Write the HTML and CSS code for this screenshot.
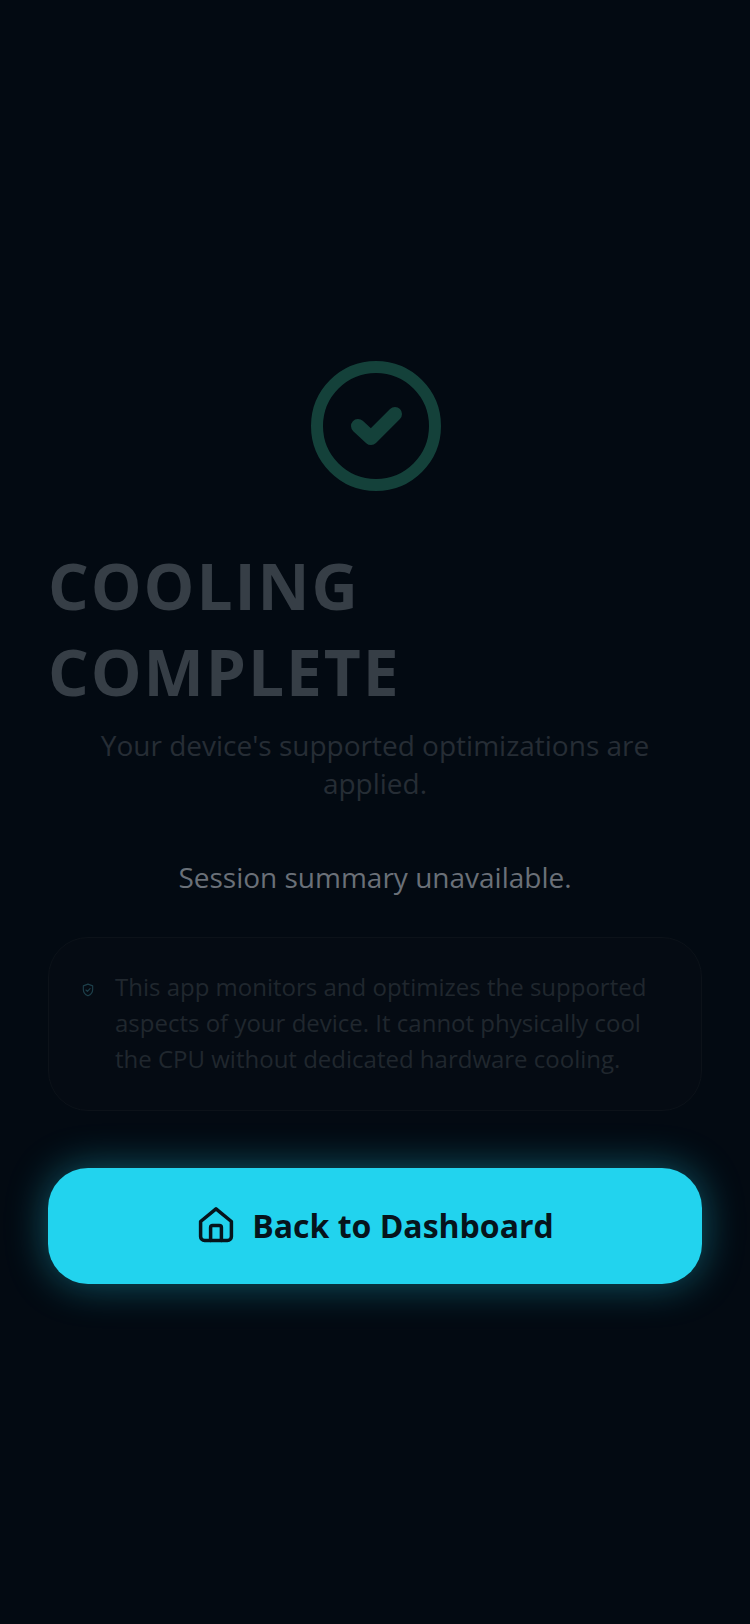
FILE: index.html
```html
<!DOCTYPE html>
<html lang="en">
<head>
    <meta charset="UTF-8">
    <meta name="viewport" content="width=device-width, initial-scale=1.0">
    <title>Cooling Complete</title>
    <link rel="stylesheet" href="styles.css">
</head>
<body>
    <main class="screen">
        <svg class="success-icon" viewBox="0 0 130 130" fill="none" stroke="#14413a" stroke-linecap="round" stroke-linejoin="round">
            <circle cx="65" cy="65" r="59" stroke-width="12"/>
            <path d="M47 65l13 12 24-24" stroke-width="14"/>
        </svg>

        <h1 class="title">COOLING COMPLETE</h1>
        <p class="subtitle">Your device's supported optimizations are applied.</p>
        <p class="summary">Session summary unavailable.</p>

        <div class="note">
            <svg class="note-icon" viewBox="0 0 24 24" fill="none" stroke="#1d3f4a" stroke-width="2" stroke-linecap="round" stroke-linejoin="round">
                <path d="M12 2l8 3v6c0 5-3.400 9-8 11-4.600-2-8-6-8-11V5z"/>
                <path d="M8.500 12l2.500 2.500 4.500-5"/>
            </svg>
            <p class="note-text">This app monitors and optimizes the supported aspects of your device. It cannot physically cool the CPU without dedicated hardware cooling.</p>
        </div>

        <button class="home-button">
            <svg class="home-icon" viewBox="0 0 40 40" fill="none" stroke="#06141c" stroke-width="3.500" stroke-linecap="round" stroke-linejoin="round">
                <path d="M4.600 15.500L20 2.800l15.400 12.700v15a4 4 0 0 1-4 4H8.600a4 4 0 0 1-4-4z"/>
                <path d="M14.600 34.500V21.500a2 2 0 0 1 2-2h6.800a2 2 0 0 1 2 2v13"/>
            </svg>
            <span class="home-label">Back to Dashboard</span>
        </button>
    </main>
</body>
</html>
```

FILE: styles.css
```css
html, body {
    margin: 0;
    height: 100%;
    background-color: #030a12;
}

body {
    font-family: "Open Sans", sans-serif;
}

.screen {
    display: flex;
    flex-direction: column;
    align-items: center;
    box-sizing: border-box;
    height: 1624px;
    padding: 361px 48px 0;
}

.success-icon {
    width: 130px;
    height: 130px;
    margin-bottom: 52px;
    margin-left: 2px;
}

.title {
    width: 100%;
    margin: 0;
    font-size: 64px;
    line-height: 86px;
    font-weight: 700;
    letter-spacing: 1.92px;
    color: #363e46;
}

.subtitle {
    margin: 11px 0 0;
    font-size: 28px;
    line-height: 38px;
    text-align: center;
    color: #262d35;
}

.summary {
    margin: 56px 0 0;
    font-size: 28px;
    line-height: 38px;
    color: #6a7078;
}

.note {
    display: flex;
    align-items: flex-start;
    gap: 20px;
    box-sizing: border-box;
    width: 654px;
    margin-top: 41px;
    padding: 31px 32px 33px;
    border: 1px solid #0c1219;
    border-radius: 40px;
    background-color: #050b13;
}

.note-icon {
    flex: none;
    width: 14px;
    height: 14px;
    margin-top: 14px;
}

.note-text {
    margin: 0;
    font-size: 24px;
    line-height: 36px;
    color: #20272e;
}

.home-button {
    display: flex;
    align-items: center;
    justify-content: center;
    gap: 16px;
    width: 654px;
    height: 116px;
    margin-top: 57px;
    border: none;
    border-radius: 40px;
    background-color: #22d3ee;
    box-shadow: 0 0 40px rgba(34, 211, 238, 0.4);
    font-family: inherit;
    font-size: 32px;
    font-weight: 700;
    color: #06141c;
}

.home-label {
    margin-bottom: 2px;
}

.home-icon {
    width: 40px;
    height: 40px;
}
```
